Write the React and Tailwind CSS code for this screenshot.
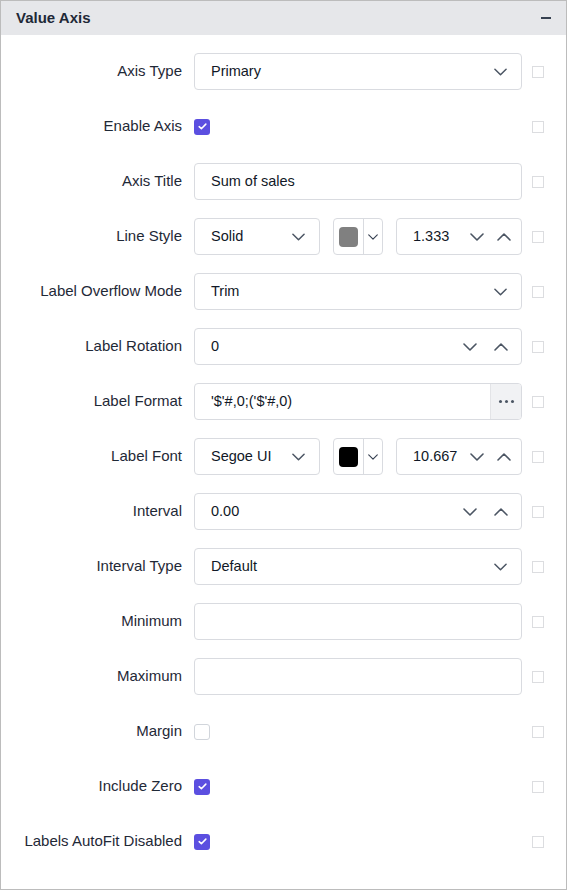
import React from 'react';

const ChevronDown = ({ className = '' }) => (
  <svg viewBox="0 0 14 8" className={className} fill="none" stroke="currentColor" strokeWidth="1.6" strokeLinecap="round" strokeLinejoin="round">
    <path d="M1 1l6 6 6-6" />
  </svg>
);

const ChevronUp = ({ className = '' }) => (
  <svg viewBox="0 0 14 8" className={className} fill="none" stroke="currentColor" strokeWidth="1.6" strokeLinecap="round" strokeLinejoin="round">
    <path d="M1 7l6-6 6 6" />
  </svg>
);

const box = 'h-[37px] rounded-[4px] border border-[#d9dbe0] bg-white flex items-center';

const Dropdown = ({ value, className = '' }) => (
  <div className={`${box} pl-4 pr-[14px] justify-between ${className}`}>
    <span>{value}</span>
    <ChevronDown className="w-[13px] h-[8px] text-[#4b5563]" />
  </div>
);

const TextBox = ({ value = '' }) => (
  <div className={`${box} px-4 w-full`}>
    <span>{value}</span>
  </div>
);

const Numeric = ({ value, wide, className = '' }) => (
  <div className={`${box} pl-4 ${wide ? 'pr-[13px]' : 'pr-[10px]'} ${className}`}>
    <span className="flex-1">{value}</span>
    <ChevronDown className="w-[14px] h-[8px] text-[#4b5563]" />
    <ChevronUp className={`w-[14px] h-[8px] text-[#4b5563] ${wide ? 'ml-[17px]' : 'ml-[13px]'}`} />
  </div>
);

const ColorPicker = ({ color }) => (
  <div className="h-[37px] w-[50px] rounded-[4px] border border-[#d9dbe0] bg-white flex items-center">
    <div className="w-[29px] flex justify-center">
      <div className="w-[19px] h-[20px] rounded-[4px]" style={{ backgroundColor: color }} />
    </div>
    <div className="w-px self-stretch bg-[#d9dbe0]" />
    <div className="flex-1 flex justify-center">
      <ChevronDown className="w-[10px] h-[6px] text-[#374151]" />
    </div>
  </div>
);

const Check = ({ checked }) =>
  checked ? (
    <div className="w-4 h-4 rounded-[3px] bg-[#5b4fe0] flex items-center justify-center">
      <svg viewBox="0 0 10 8" className="w-[9px] h-[7px]" fill="none" stroke="white" strokeWidth="1.8" strokeLinecap="round" strokeLinejoin="round">
        <path d="M1.2 4.2l2.5 2.3L8.8 1.3" />
      </svg>
    </div>
  ) : (
    <div className="w-4 h-4 rounded-[3px] border border-[#d1d5db] bg-white" />
  );

const Row = ({ label, children }) => (
  <div className="h-[55px] flex items-center">
    <div className="w-[181px] text-right text-[15px] text-[#1f2937]">{label}</div>
    <div className="ml-3 w-[328px] flex items-center">{children}</div>
    <div className="ml-[10px] w-3 h-3 border border-[#dcdde0] bg-white" />
  </div>
);

export default function App() {
  return (
    <div className="w-[567px] h-[890px] border border-[#bcbcbc] bg-white text-[14.5px] text-[#111827] font-['Liberation_Sans',sans-serif]">
      <div className="h-[34px] bg-[#e6e7ea] flex items-center justify-between pl-[15px] pr-[15px]">
        <span className="text-[15px] font-bold text-[#1f2937]">Value Axis</span>
        <div className="w-[10px] h-[1.5px] bg-[#374151]" />
      </div>
      <div className="pt-[9px]">
        <Row label="Axis Type">
          <Dropdown value="Primary" className="w-full" />
        </Row>
        <Row label="Enable Axis">
          <Check checked />
        </Row>
        <Row label="Axis Title">
          <TextBox value="Sum of sales" />
        </Row>
        <Row label="Line Style">
          <Dropdown value="Solid" className="w-[126px]" />
          <div className="ml-[13px]"><ColorPicker color="#808080" /></div>
          <Numeric value="1.333" className="ml-[13px] w-[126px]" />
        </Row>
        <Row label="Label Overflow Mode">
          <Dropdown value="Trim" className="w-full" />
        </Row>
        <Row label="Label Rotation">
          <Numeric value="0" wide className="w-full" />
        </Row>
        <Row label="Label Format">
          <div className="h-[37px] w-full rounded-[4px] border border-[#d9dbe0] bg-white flex overflow-hidden">
            <div className="flex-1 pl-4 flex items-center">'$'#,0;('$'#,0)</div>
            <div className="w-[31px] bg-[#f1f2f4] border-l border-[#e3e4e7] flex items-center justify-center gap-[3px]">
              <span className="w-[3px] h-[3px] rounded-full bg-[#4b5563]" />
              <span className="w-[3px] h-[3px] rounded-full bg-[#4b5563]" />
              <span className="w-[3px] h-[3px] rounded-full bg-[#4b5563]" />
            </div>
          </div>
        </Row>
        <Row label="Label Font">
          <Dropdown value="Segoe UI" className="w-[126px]" />
          <div className="ml-[13px]"><ColorPicker color="#000000" /></div>
          <Numeric value="10.667" className="ml-[13px] w-[126px]" />
        </Row>
        <Row label="Interval">
          <Numeric value="0.00" wide className="w-full" />
        </Row>
        <Row label="Interval Type">
          <Dropdown value="Default" className="w-full" />
        </Row>
        <Row label="Minimum">
          <TextBox />
        </Row>
        <Row label="Maximum">
          <TextBox />
        </Row>
        <Row label="Margin">
          <Check />
        </Row>
        <Row label="Include Zero">
          <Check checked />
        </Row>
        <Row label="Labels AutoFit Disabled">
          <Check checked />
        </Row>
      </div>
    </div>
  );
}
